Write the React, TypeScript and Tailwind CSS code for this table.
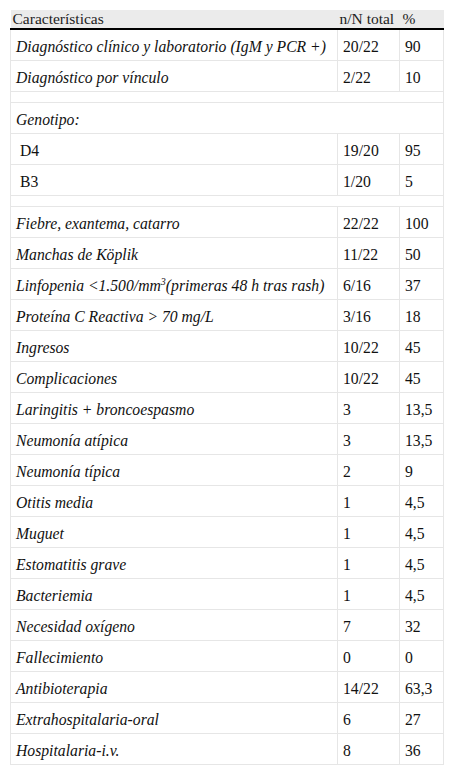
import React from "react";

type Row =
  | { kind: "data"; label: React.ReactNode; n: string; p: string; italic?: boolean }
  | { kind: "spacer" }
  | { kind: "span"; label: string };

const rows: Row[] = [
  { kind: "data", label: "Diagnóstico clínico y laboratorio (IgM y PCR +)", n: "20/22", p: "90", italic: true },
  { kind: "data", label: "Diagnóstico por vínculo", n: "2/22", p: "10", italic: true },
  { kind: "spacer" },
  { kind: "span", label: "Genotipo:" },
  { kind: "data", label: "\u00a0D4", n: "19/20", p: "95" },
  { kind: "data", label: "\u00a0B3", n: "1/20", p: "5" },
  { kind: "spacer" },
  { kind: "data", label: "Fiebre, exantema, catarro", n: "22/22", p: "100", italic: true },
  { kind: "data", label: "Manchas de Köplik", n: "11/22", p: "50", italic: true },
  {
    kind: "data",
    label: (
      <>
        Linfopenia &lt;1.500/mm<sup className="text-[10px] -top-[6px]">3</sup>(primeras 48 h tras rash)
      </>
    ),
    n: "6/16",
    p: "37",
    italic: true,
  },
  { kind: "data", label: "Proteína C Reactiva > 70 mg/L", n: "3/16", p: "18", italic: true },
  { kind: "data", label: "Ingresos", n: "10/22", p: "45", italic: true },
  { kind: "data", label: "Complicaciones", n: "10/22", p: "45", italic: true },
  { kind: "data", label: "Laringitis + broncoespasmo", n: "3", p: "13,5", italic: true },
  { kind: "data", label: "Neumonía atípica", n: "3", p: "13,5", italic: true },
  { kind: "data", label: "Neumonía típica", n: "2", p: "9", italic: true },
  { kind: "data", label: "Otitis media", n: "1", p: "4,5", italic: true },
  { kind: "data", label: "Muguet", n: "1", p: "4,5", italic: true },
  { kind: "data", label: "Estomatitis grave", n: "1", p: "4,5", italic: true },
  { kind: "data", label: "Bacteriemia", n: "1", p: "4,5", italic: true },
  { kind: "data", label: "Necesidad oxígeno", n: "7", p: "32", italic: true },
  { kind: "data", label: "Fallecimiento", n: "0", p: "0", italic: true },
  { kind: "data", label: "Antibioterapia", n: "14/22", p: "63,3", italic: true },
  { kind: "data", label: "Extrahospitalaria-oral", n: "6", p: "27", italic: true },
  { kind: "data", label: "Hospitalaria-i.v.", n: "8", p: "36", italic: true },
];

const font = "[font-family:'Liberation_Serif','Times_New_Roman',serif]";
const cell = `border border-[#e6e6e6] px-[5px] h-[31px] pt-[4px] pb-0 align-middle ${font} text-[15.7px] leading-[18px] text-[#111]`;
const head = `text-left font-normal h-[18px] py-0 border-b-2 border-black text-[#222] ${font} text-[15.5px] leading-[18px]`;

export default function App() {
  return (
    <div className={`bg-white min-h-[770px] pt-[10px] pl-[10px] ${font}`}>
      <table className={`table-fixed border-collapse w-[433px] ${font} text-[15.7px] text-black leading-[18px]`}>
        <colgroup>
          <col className="w-[327px]" />
          <col className="w-[62px]" />
          <col className="w-[44px]" />
        </colgroup>
        <thead>
          <tr className="bg-[#ebebeb]">
            <th className={`${head} pl-[2px] pr-[2px]`}>Características</th>
            <th className={`${head} pl-[2px] whitespace-nowrap`}>n/N total</th>
            <th className={`${head} pl-[3px]`}>%</th>
          </tr>
        </thead>
        <tbody>
          {rows.map((r, i) => {
            if (r.kind === "spacer") {
              return (
                <tr key={i}>
                  <td colSpan={3} className="border border-[#e6e6e6] h-[11px] p-0"></td>
                </tr>
              );
            }
            if (r.kind === "span") {
              return (
                <tr key={i}>
                  <td colSpan={3} className={`${cell} italic`}>
                    {r.label}
                  </td>
                </tr>
              );
            }
            return (
              <tr key={i}>
                <td className={`${cell} ${r.italic ? "italic" : ""} whitespace-nowrap`}>{r.label}</td>
                <td className={cell}>{r.n}</td>
                <td className={cell}>{r.p}</td>
              </tr>
            );
          })}
        </tbody>
      </table>
    </div>
  );
}
